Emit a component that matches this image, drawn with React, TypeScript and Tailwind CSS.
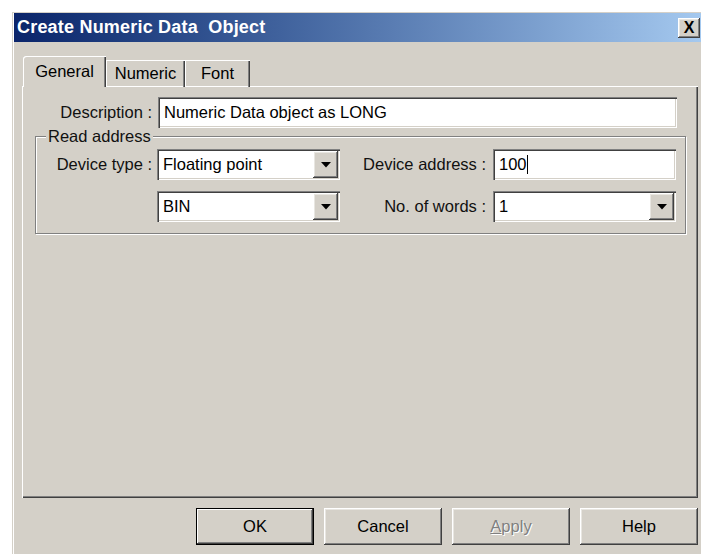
import React from 'react'

const FONT = { fontFamily: '"Liberation Sans", Arial, sans-serif' }

// Classic 3D bevels, drawn with inset shadows so they never push the layout
const sunken =
  'bg-white shadow-[inset_1px_1px_0_#808080,inset_2px_2px_0_#404040,inset_-1px_-1px_0_#ffffff,inset_-2px_-2px_0_#d4d0c8]'
const raised =
  'bg-[#d4d0c8] shadow-[inset_-1px_-1px_0_#404040,inset_1px_1px_0_#ffffff,inset_-2px_-2px_0_#808080,inset_2px_2px_0_#e8e6e1]'

function TextField({ value, caret = false, className = '' }: { value: string; caret?: boolean; className?: string }) {
  return (
    <div className={`${sunken} h-[31px] flex items-center pl-[6px] text-[16.5px] text-black ${className}`}>
      <span>{value}</span>
      {caret && <span className="inline-block w-[1px] h-[19px] bg-black" />}
    </div>
  )
}

function ComboBox({ value, className = '' }: { value: string; className?: string }) {
  return (
    <div className={`${sunken} h-[31px] flex items-center pl-[6px] pr-[2px] text-[16.5px] text-black ${className}`}>
      <span className="flex-1">{value}</span>
      <div className={`${raised} w-[25px] h-[27px] flex items-center justify-center`}>
        <svg width="10" height="6" viewBox="0 0 10 6">
          <polygon points="0,0 10,0 5,5.5" fill="#000" />
        </svg>
      </div>
    </div>
  )
}

function Tab({ label, active = false, width }: { label: string; active?: boolean; width: string }) {
  return (
    <div
      className={`${width} ${
        active
          ? 'h-[31px] z-10 bg-[#d4d0c8] rounded-tl-[3px] shadow-[inset_1px_1px_0_#ffffff,inset_-1px_0_0_#404040,inset_-2px_0_0_#808080]'
          : 'h-[27px] shadow-[inset_1px_1px_0_#ffffff,inset_-1px_0_0_#404040,inset_-2px_0_0_#808080]'
      } flex items-center justify-center text-[16.5px] text-black`}
    >
      {label}
    </div>
  )
}

function DialogButton({ label, isDefault = false, disabled = false }: { label: React.ReactNode; isDefault?: boolean; disabled?: boolean }) {
  return (
    <div
      className={`w-[118px] h-[37px] flex items-center justify-center text-[16.5px] ${
        isDefault
          ? 'bg-[#d4d0c8] shadow-[inset_0_0_0_1px_#000000,inset_-2px_-2px_0_#404040,inset_2px_2px_0_#ffffff,inset_-3px_-3px_0_#808080]'
          : raised
      } ${disabled ? 'text-[#808080] [text-shadow:1px_1px_0_#ffffff]' : 'text-black'}`}
    >
      {label}
    </div>
  )
}

export default function App() {
  return (
    <div className="w-[701px] h-[554px] overflow-hidden bg-white" style={FONT}>
      <div className="ml-[12px] mt-[12px] w-[694px] h-[560px] bg-[#d4d0c8] pt-[1px] pl-[2px] shadow-[inset_1px_1px_0_#d4d0c8,inset_2px_2px_0_#ffffff]">
        {/* title bar */}
        <div className="h-[29px] flex items-center bg-gradient-to-r from-[#0a246a] to-[#a6caf0] pl-[3px] pr-[6px]">
          <span className="text-white font-bold text-[18px] whitespace-pre tracking-[0.2px]">Create Numeric Data  Object</span>
          <div className={`${raised} ml-auto w-[22px] h-[20px] flex items-center justify-center`}>
            <span className="font-bold text-[16px] leading-none text-black">X</span>
          </div>
        </div>

        <div className="pl-[8px] pt-[14px]">
          {/* tabs */}
          <div className="flex items-end pl-[1px] -mb-[1px] relative">
            <Tab label="General" active width="w-[83px]" />
            <Tab label="Numeric" width="w-[79px]" />
            <Tab label="Font" width="w-[65px]" />
          </div>

          {/* tab page */}
          <div className="w-[676px] h-[412px] shadow-[inset_1px_1px_0_#ffffff,inset_-1px_-1px_0_#404040,inset_-2px_-2px_0_#808080] pt-[11px] text-[16.5px] text-[#111]">
            <div className="flex items-center">
              <span className="w-[130px] text-right">Description :</span>
              <TextField value="Numeric Data object as LONG" className="ml-[6px] w-[519px]" />
            </div>

            <div className="mt-[8px] ml-[13px] w-[651px] relative border border-[#808080] shadow-[1px_1px_0_#ffffff,inset_1px_1px_0_#ffffff] pt-[12px] pb-[11px]">
              <span className="absolute -top-[11px] left-[10px] bg-[#d4d0c8] px-[2px] leading-[20px]">Read address</span>
              <div className="flex items-center">
                <span className="w-[116px] text-right">Device type :</span>
                <ComboBox value="Floating point" className="ml-[5px] w-[183px]" />
                <span className="w-[146px] text-right">Device address :</span>
                <TextField value="100" caret className="ml-[7px] w-[183px]" />
              </div>
              <div className="flex items-center mt-[11px]">
                <span className="w-[116px]" />
                <ComboBox value="BIN" className="ml-[5px] w-[183px]" />
                <span className="w-[146px] text-right">No. of words :</span>
                <ComboBox value="1" className="ml-[7px] w-[183px]" />
              </div>
            </div>
          </div>

          {/* dialog buttons */}
          <div className="w-[676px] flex justify-end gap-[10px] mt-[10px]">
            <DialogButton label="OK" isDefault />
            <DialogButton label="Cancel" />
            <DialogButton
              label={
                <span>
                  <span className="underline">A</span>pply
                </span>
              }
              disabled
            />
            <DialogButton label="Help" />
          </div>
        </div>
      </div>
    </div>
  )
}
